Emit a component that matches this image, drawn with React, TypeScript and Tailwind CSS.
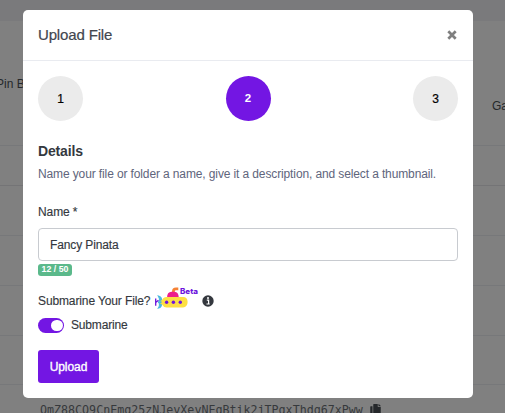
import React from "react";

const rules = ["h-[125px]", "h-10", "h-[50px]", "h-[50px]", "h-[50px]", "h-[49px]"];

function Backdrop() {
  return (
    <div className="relative h-full w-full bg-[#808080] text-[#25282b]">
      <div className="h-[21px] bg-[#7a7a7c]" />
      {rules.map((h, i) => (
        <div key={i} className={`${h} border-b ${i === 1 ? "border-[#747476]" : "border-[#77787a]"}`} />
      ))}
      <span className="absolute top-[76px] -left-[4px] text-[12px] leading-4 whitespace-nowrap">Pin By</span>
      <span className="absolute top-[98px] left-[492px] text-[12px] leading-4 whitespace-nowrap">Gateway</span>
      <div className="absolute top-[402px] left-[40px] flex items-start whitespace-nowrap">
        <span className="font-['DejaVu_Sans_Mono',monospace] text-[11.66px] leading-4 text-[#36393c]">
          QmZ88CQ9CnEmq25zNJeyXeyNEqBtik2jTPqxThdq67xPww
        </span>
        <svg className="mt-[2px] ml-[7px] h-3 w-[11px]" viewBox="0 0 448 512" fill="#25282b">
          <path d="M320 448v40c0 13-11 24-24 24H24c-13 0-24-11-24-24V120c0-13 11-24 24-24h72v296c0 31 25 56 56 56h168zm0-344V0H152c-13 0-24 11-24 24v368c0 13 11 24 24 24h272c13 0 24-11 24-24V128H344c-13 0-24-11-24-24zm121-31L375 7a24 24 0 0 0-17-7h-6v96h96v-6a24 24 0 0 0-7-17z" />
        </svg>
      </div>
    </div>
  );
}

function SubmarineIcon() {
  return (
    <svg className="h-7 w-12 shrink-0" viewBox="0 0 48 28">
      <path d="M21.4 9V7.6Q21.4 4.9 24 4.9H26.3" fill="none" stroke="#f58235" strokeWidth="2.8" />
      <path d="M15 14Q15 7.8 19.5 7.8H22.5Q26.6 7.8 26.8 14Z" fill="#ed1e8c" />
      <path d="M6.5 12.2Q9.8 13 9.5 17H7.5Q8 14.5 6.5 12.2ZM6.5 24Q9.8 23 9.5 19H7.5Q8 21.5 6.5 24Z" fill="#4bb9df" stroke="#4bb9df" strokeWidth="1.3" />
      <path d="M3.7 14.5V21.8M4 18.2L6.5 16.2" fill="none" stroke="#6d15dd" strokeWidth="1.3" />
      <path d="M6 18.2L10 16Q11.5 13 14.5 13H31Q35.6 13 35.6 18T31 23.4H14.5Q11.5 23.4 10 20.5Z" fill="#fddf43" />
      <path d="M6 18.2H9.5" stroke="#4bb9df" strokeWidth="2" />
      <g fill="#6d15dd">
        <circle cx="14.6" cy="18.3" r="1.7" />
        <circle cx="21.4" cy="18.3" r="1.7" />
        <circle cx="28.3" cy="18.3" r="1.7" />
      </g>
      <text x="28" y="10.4" fill="#6d15dd" fontSize="7.2" fontWeight="800" fontFamily="Inter, sans-serif" textLength="18" lengthAdjust="spacingAndGlyphs">Beta</text>
    </svg>
  );
}

function Step({ n, active }: { n: number; active?: boolean }) {
  return (
    <div className={`flex h-[45px] w-[45px] items-center justify-center rounded-full ${active ? "bg-[#7316e3] text-[11.5px] font-bold text-white" : "bg-[#ebebeb] text-[12px] text-black [-webkit-text-stroke:0.2px_currentColor]"}`}>
      {n}
    </div>
  );
}

export default function App() {
  return (
    <div className="relative h-[413px] w-[505px] overflow-hidden font-['Liberation_Sans',Arial,sans-serif]">
      <Backdrop />
      <div className="absolute top-[10px] left-[23px] h-[388px] w-[450px] rounded-[5px] bg-white text-[#34383e]">
        <header className="flex h-[51px] items-center justify-between border-b border-[#e9ebf0] px-[15px]">
          <h1 className="text-[15px] leading-5 tracking-[-0.15px] text-[#42464f] [-webkit-text-stroke:0.2px_currentColor]">Upload File</h1>
          <button aria-label="Close" className="h-3 w-3">
            <svg viewBox="0 0 12 12" className="h-3 w-3" fill="none" stroke="#7f7f7f" strokeWidth="2.7">
              <path d="M2.3 2.3L9.7 9.7M9.7 2.3L2.3 9.7" />
            </svg>
          </button>
        </header>
        <main className="flex flex-col items-start px-[15px] pt-[15px]">
          <div className="flex w-full justify-between">
            <Step n={1} />
            <Step n={2} active />
            <Step n={3} />
          </div>
          <h2 className="mt-5 text-[14px] leading-5 font-bold tracking-[-0.15px]">Details</h2>
          <p className="mt-[5px] text-[12px] leading-4 tracking-[-0.12px] whitespace-nowrap text-[#60657c]">
            Name your file or folder a name, give it a description, and select a thumbnail.
          </p>
          <label className="mt-[22px] text-[12px] leading-4 tracking-[-0.1px] [-webkit-text-stroke:0.15px_currentColor]">Name *</label>
          <input
            className="mt-2 h-[33px] w-full rounded-[4px] border border-[#c8cbd0] px-[11px] text-[12px] tracking-[-0.12px] text-[#34383e] [-webkit-text-stroke:0.15px_currentColor]"
            defaultValue="Fancy Pinata"
          />
          <span className="mt-[3px] flex h-3 w-[34px] items-center justify-center rounded-[3px] bg-[#5bb98b] text-[8.8px] font-bold whitespace-nowrap text-white">
            12 / 50
          </span>
          <div className="mt-2 flex h-7 items-center">
            <span className="w-[114px] pt-[6px] text-[12px] leading-4 tracking-[-0.12px] whitespace-nowrap [-webkit-text-stroke:0.15px_currentColor]">Submarine Your File?</span>
            <SubmarineIcon />
            <svg viewBox="0 0 12 12" className="mt-[5px] ml-[2px] h-3 w-3">
              <circle cx="6" cy="6" r="5.7" fill="#34383e" />
              <path d="M4.8 5.1H6.6V8.7M4.5 9H7.7" stroke="#fff" strokeWidth="1.2" fill="none" />
              <circle cx="6" cy="3" r="1" fill="#fff" />
            </svg>
          </div>
          <div className="mt-[6px] flex h-[15px] items-center">
            <span className="flex h-[15px] w-[26px] items-center justify-end rounded-full bg-[#7316e3] pr-[1.5px]">
              <span className="h-[11.5px] w-[11.5px] rounded-full bg-white" />
            </span>
            <span className="-mt-px ml-[7px] text-[12px] leading-4 tracking-[-0.17px] [-webkit-text-stroke:0.15px_currentColor]">Submarine</span>
          </div>
          <button className="mt-[17px] h-[33px] w-[61px] rounded-[3px] bg-[#7316e3] text-[12px] tracking-[-0.05px] text-white [-webkit-text-stroke:0.35px_currentColor]">Upload</button>
        </main>
      </div>
    </div>
  );
}
